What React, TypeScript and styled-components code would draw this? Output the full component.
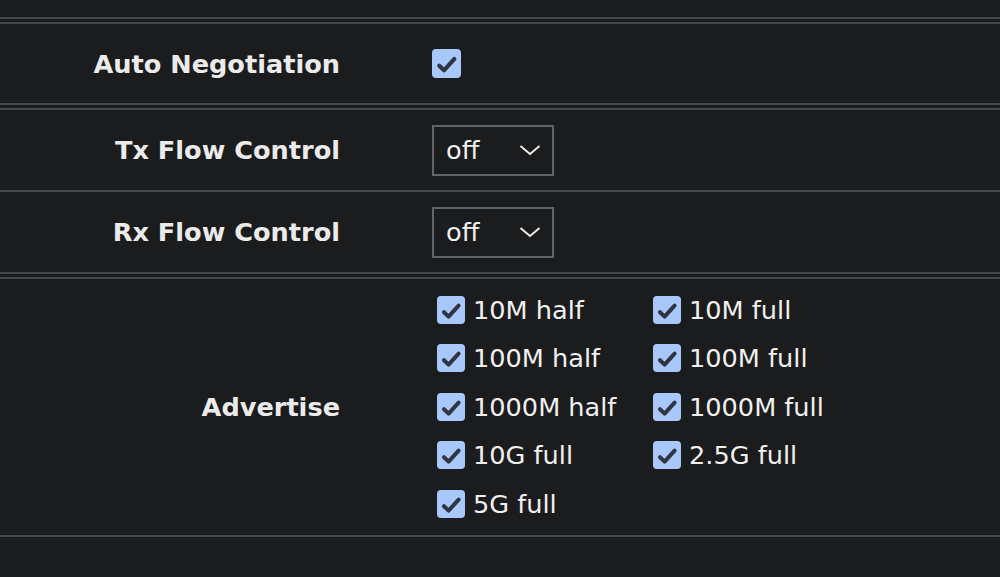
import React from "react";
import styled, { createGlobalStyle } from "styled-components";

const GlobalStyle = createGlobalStyle`
  html, body {
    margin: 0;
    padding: 0;
    background: #1b1c1e;
  }
  body {
    font-family: "DejaVu Sans", Verdana, sans-serif;
    color: #ececec;
  }
`;

const Page = styled.div`
  padding-top: 17px;
  width: 1000px;
  height: 577px;
  box-sizing: border-box;
  overflow: hidden;
`;

const Section = styled.div`
  border-top: 2px solid #45484c;
  padding-top: 3px;
`;

const Group = styled.div`
  border-top: 2px solid #45484c;
  border-bottom: 2px solid #45484c;
  margin-bottom: 3px;
`;

const Row = styled.div<{ $dense?: boolean }>`
  display: flex;
  align-items: center;
  padding: ${({ $dense }) => ($dense ? "6.5px 0" : "14.5px 0")};

  & + & {
    border-top: 2px solid #45484c;
  }
`;

const Label = styled.div`
  width: 340px;
  flex: none;
  text-align: right;
  font-size: 25.6px;
  font-weight: bold;
  color: #ebebeb;
`;

const Field = styled.div`
  margin-left: 92px;
  min-height: 50px;
  display: flex;
  align-items: center;
  font-size: 25.6px;
`;

const Box = styled.span<{ $size: number }>`
  width: ${({ $size }) => $size}px;
  height: ${({ $size }) => $size}px;
  flex: none;
  border-radius: 4px;
  background: #a8c7fa;
  display: inline-flex;
  align-items: center;
  justify-content: center;
`;

const SelectBox = styled.div`
  width: 122px;
  height: 51px;
  box-sizing: border-box;
  border: 2px solid #626466;
  background: #1b1c1e;
  display: flex;
  align-items: center;
  justify-content: space-between;
  padding: 0 11px 0 12px;
  font-size: 25.6px;
  color: #f0f0f0;
`;

const OptionGrid = styled.div`
  display: grid;
  grid-template-columns: 216px auto;
  grid-auto-rows: 48.5px;
  margin-left: 5px;
`;

const Option = styled.label`
  display: flex;
  align-items: center;
  gap: 8px;
  font-size: 25.6px;
  color: #f0f0f0;
  white-space: nowrap;
`;

const Checkbox: React.FC<{ size?: number }> = ({ size = 28 }) => (
  <Box $size={size}>
    <svg width={size} height={size} viewBox="0 0 28 28">
      <path
        d="M7 16.2 L11.6 20.6 L21.6 9.6"
        fill="none"
        stroke="#2f3542"
        strokeWidth="4"
        strokeLinecap="round"
        strokeLinejoin="round"
      />
    </svg>
  </Box>
);

const Select: React.FC<{ value: string }> = ({ value }) => (
  <SelectBox>
    <span>{value}</span>
    <svg width="22" height="12" viewBox="0 0 22 12">
      <path d="M1.5 2 L11 10 L20.5 2" fill="none" stroke="#f0f0f0" strokeWidth="1.8" />
    </svg>
  </SelectBox>
);

const speeds = [
  "10M half",
  "10M full",
  "100M half",
  "100M full",
  "1000M half",
  "1000M full",
  "10G full",
  "2.5G full",
  "5G full",
];

export default function App() {
  return (
    <>
      <GlobalStyle />
      <Page>
        <Section>
          <Group>
            <Row>
              <Label>Auto Negotiation</Label>
              <Field>
                <Checkbox size={29} />
              </Field>
            </Row>
          </Group>
          <Group>
            <Row>
              <Label>Tx Flow Control</Label>
              <Field>
                <Select value="off" />
              </Field>
            </Row>
            <Row>
              <Label>Rx Flow Control</Label>
              <Field>
                <Select value="off" />
              </Field>
            </Row>
          </Group>
          <Group>
            <Row $dense>
              <Label>Advertise</Label>
              <Field>
                <OptionGrid>
                  {speeds.map((s) => (
                    <Option key={s}>
                      <Checkbox />
                      {s}
                    </Option>
                  ))}
                </OptionGrid>
              </Field>
            </Row>
          </Group>
        </Section>
      </Page>
    </>
  );
}
